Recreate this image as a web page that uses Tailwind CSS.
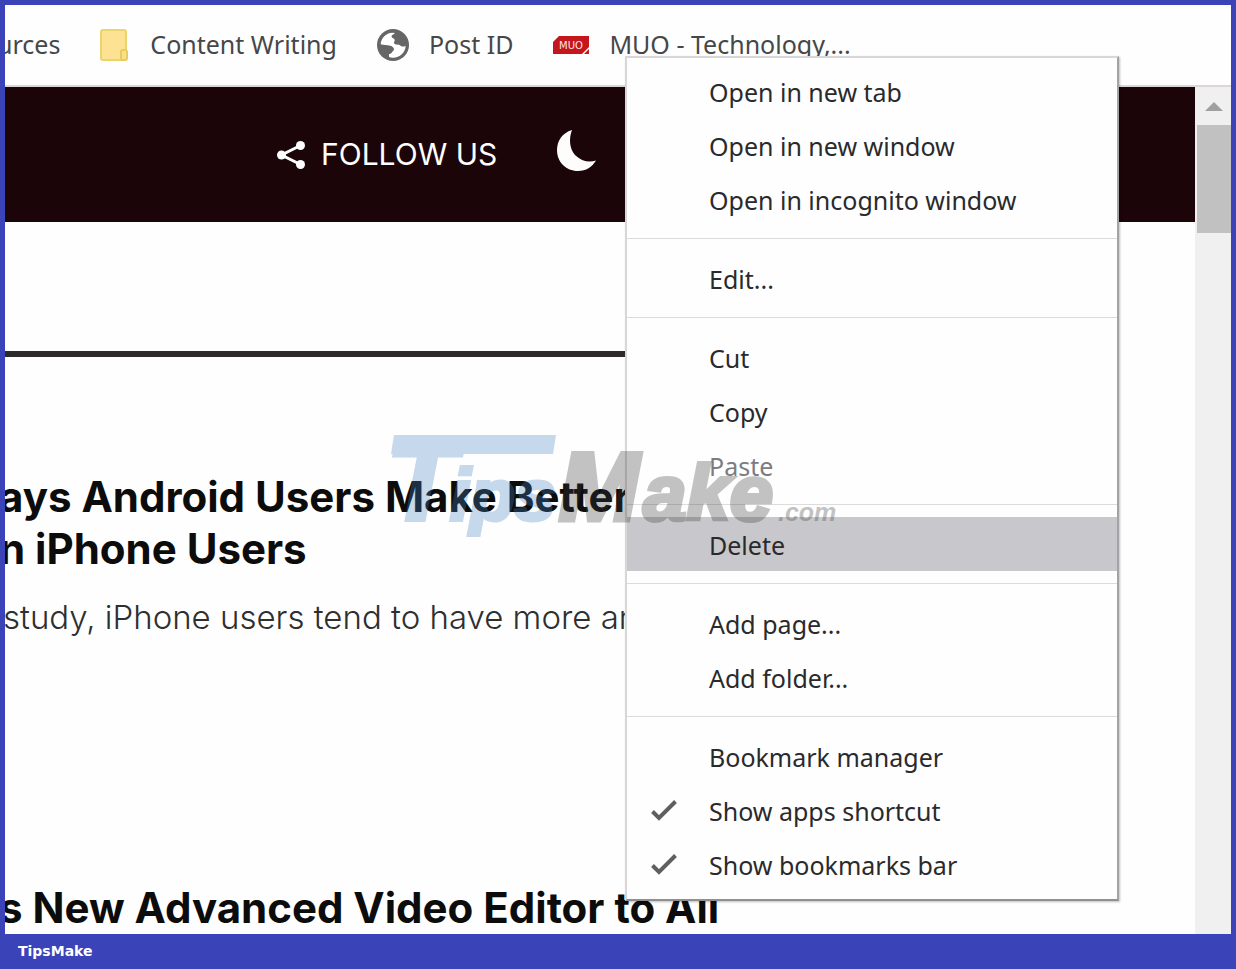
<!DOCTYPE html>
<html lang="en">

<head>
    <meta charset="UTF-8" />
    <meta name="viewport" content="width=device-width, initial-scale=1.0" />
    <title>TipsMake</title>
    <script src="https://cdn.jsdelivr.net/npm/@tailwindcss/browser@4"></script>
</head>

<body class="bg-[#3a43b8]">
    <div class="relative flex h-screen flex-col overflow-hidden px-[5px] pt-[5px]">

        <!-- Bookmarks bar -->
        <nav class="flex h-[82px] shrink-0 items-center gap-10 overflow-hidden whitespace-nowrap border-b-2 border-[#dcd6d7] bg-[#fefefe] font-['Noto_Sans',sans-serif] text-[25px] text-[#454749]">
            <a href="#" class="-ml-2">urces</a>
            <a href="#" class="flex items-center gap-5">
                <svg class="h-8 w-[30px]" viewBox="0 0 30 32">
                    <rect x="1" y="1" width="25" height="30" rx="2" fill="#fde293" stroke="#ecd36c" stroke-width="2" />
                    <rect x="21" y="21" width="6" height="10" rx="2" fill="#fbe08a" stroke="#e8cc5c" stroke-width="2" />
                </svg>
                Content Writing
            </a>
            <a href="#" class="flex items-center gap-5">
                <svg class="size-8" viewBox="0 0 96 96">
                    <circle cx="48" cy="48" r="48" fill="#666" />
                    <path d="M11 46C12 27 27 12 46 11L54 12C50 17 43 17 44 24C45 28 52 27 53 32C54 36 50 38 51 42C54 49 66 45 71 50C75 53 80 54 86 50C85 70 69 86 48 86C45 86 39 85 36 83L36 75C45 74 44 68 49 65C54 61 49 52 40 50C30 48 20 48 11 46Z" fill="#fff" />
                    <path d="M66 15C76 20 84 30 86 42C81 44 77 41 75 37C70 37 64 36 62 31C61 25 66 22 66 15Z" fill="#666" />
                </svg>
                Post ID
            </a>
            <a href="#" class="flex items-center gap-5">
                <svg class="h-[18px] w-9" viewBox="0 0 36 18">
                    <path d="M6 0H36V11L29 18H0V6Z" fill="#c4161c" />
                    <path d="M36 13V18H31Z" fill="#c4161c" />
                    <text x="6" y="13" font-family="DejaVu Sans, sans-serif" font-size="10" fill="#fbe3e3">MUO</text>
                </svg>
                MUO - Technology,...
            </a>
        </nav>

        <div class="flex min-h-0 flex-1 bg-[#fefefe]">
            <main class="min-w-0 flex-1 overflow-hidden whitespace-nowrap font-['Inter',sans-serif]">
                <header class="flex h-[135px] items-center bg-[#1c0508] pl-[272px] text-white">
                    <button class="flex items-center gap-4 text-[30px]">
                        <svg class="h-7 w-[28px]" viewBox="0 0 28 28" fill="#fff">
                            <path d="M23.500 4.500L4.500 14L23.500 23.500" fill="none" stroke="#fff" stroke-width="3" />
                            <circle cx="23.500" cy="4.500" r="4.500" />
                            <circle cx="4.500" cy="14" r="4.500" />
                            <circle cx="23.500" cy="23.500" r="4.500" />
                        </svg>
                        FOLLOW US
                    </button>
                    <button aria-label="Dark mode" class="mb-2 ml-[60px]">
                        <svg class="h-[41px] w-[39px]" viewBox="0 0 39 41">
                            <path d="M15 0C5 3 0 11 0 20C0 32 9 41 21 41C29 41 35 37 39 30.500C32 33 24 31 18 25C12 18 12 8 15 0Z" fill="#fffdfc" />
                        </svg>
                    </button>
                </header>

                <div class="mt-[129px] mr-[570px] h-1.5 bg-[#2c2a2b]"></div>

                <article class="mt-[114px]">
                    <h2 class="-ml-1.5 text-[42px] leading-[52px] font-bold text-[#0c0c0c]">ays Android Users Make Better<br />n iPhone Users</h2>
                    <p class="mt-5 -ml-0.5 text-[33px] leading-[44px] font-light text-[#2f2f2f]">study, iPhone users tend to have more and</p>
                </article>

                <article class="mt-[243px]">
                    <h2 class="-ml-1.5 text-[42px] leading-[52px] font-bold text-[#0c0c0c]">s New Advanced Video Editor to All</h2>
                </article>
            </main>

            <!-- Scrollbar -->
            <div class="w-9 shrink-0 bg-[#f0f0f0]">
                <div class="flex h-[38px] items-center justify-center pl-0.5">
                    <svg class="h-[9px] w-[18px]" viewBox="0 0 18 9">
                        <path d="M9 0L18 9H0Z" fill="#a0a0a0" />
                    </svg>
                </div>
                <div class="ml-0.5 h-[108px] bg-[#c2c1c1]"></div>
            </div>
        </div>

        <footer class="flex h-[35px] shrink-0 items-center pl-[13px] font-['DejaVu_Sans',sans-serif] text-[14px] font-bold text-white">TipsMake</footer>

        <!-- Context menu -->
        <div role="menu" class="absolute top-14 left-[625px] w-[494px] border-2 border-[#d9d6d8] border-r-[#a3a3a3] border-b-[#8f8f8f] bg-[#fefefe] pt-1.5 pb-2 font-['Noto_Sans',sans-serif] text-[25px] text-[#2a2a2c] shadow-[1px_1px_2px_rgba(0,0,0,0.25)]">
            <button role="menuitem" class="flex h-[54px] w-full items-center pt-1 pl-[82px]">Open in new tab</button>
            <button role="menuitem" class="flex h-[54px] w-full items-center pt-1 pl-[82px]">Open in new window</button>
            <button role="menuitem" class="flex h-[54px] w-full items-center pt-1 pl-[82px]">Open in incognito window</button>
            <hr class="my-3 border-[#dcdcdc]" />
            <button role="menuitem" class="flex h-[54px] w-full items-center pt-1 pl-[82px]">Edit...</button>
            <hr class="my-3 border-[#dcdcdc]" />
            <button role="menuitem" class="flex h-[54px] w-full items-center pt-1 pl-[82px]">Cut</button>
            <button role="menuitem" class="flex h-[54px] w-full items-center pt-1 pl-[82px]">Copy</button>
            <button role="menuitem" disabled class="flex h-[54px] w-full items-center pt-1 pl-[82px] text-[#7c7c7e]">Paste</button>
            <hr class="my-3 border-[#dcdcdc]" />
            <button role="menuitem" class="flex h-[54px] w-full items-center bg-[#c8c7cb] pt-1 pl-[82px]">Delete</button>
            <hr class="my-3 border-[#dcdcdc]" />
            <button role="menuitem" class="flex h-[54px] w-full items-center pt-1 pl-[82px]">Add page...</button>
            <button role="menuitem" class="flex h-[54px] w-full items-center pt-1 pl-[82px]">Add folder...</button>
            <hr class="my-3 border-[#dcdcdc]" />
            <button role="menuitem" class="flex h-[54px] w-full items-center pt-1 pl-[82px]">Bookmark manager</button>
            <button role="menuitemcheckbox" aria-checked="true" class="flex h-[54px] w-full items-center gap-8 pt-1 pl-6">
                <svg class="h-6 w-[26px]" viewBox="0 0 26 24">
                    <path d="M1.500 11.500L8 18L24.500 1.500" fill="none" stroke="#5f5f61" stroke-width="4" />
                </svg>
                Show apps shortcut
            </button>
            <button role="menuitemcheckbox" aria-checked="true" class="flex h-[54px] w-full items-center gap-8 pt-1 pl-6">
                <svg class="h-6 w-[26px]" viewBox="0 0 26 24">
                    <path d="M1.500 11.500L8 18L24.500 1.500" fill="none" stroke="#5f5f61" stroke-width="4" />
                </svg>
                Show bookmarks bar
            </button>
        </div>

        <!-- Watermark -->
        <svg class="pointer-events-none absolute top-[430px] left-[385px] h-[110px] w-[460px] opacity-30" viewBox="0 0 460 110" font-family="Liberation Sans, sans-serif" font-weight="bold" font-style="italic">
            <g fill="#4484c4" stroke="#4484c4">
                <path d="M9 5H171L168 24H6Z" stroke="none" />
                <text x="2" y="89" font-size="112" stroke-width="5">T</text>
                <text x="65" y="90" font-size="73" stroke-width="4">ips</text>
            </g>
            <g fill="#3a3a3a" stroke="#3a3a3a">
                <text x="174" y="90" font-size="96" stroke-width="5">M</text>
                <text x="258" y="90" font-size="78" stroke-width="4">ake</text>
                <text x="393" y="91" font-size="25" stroke="none">.com</text>
            </g>
        </svg>
    </div>
</body>

</html>
